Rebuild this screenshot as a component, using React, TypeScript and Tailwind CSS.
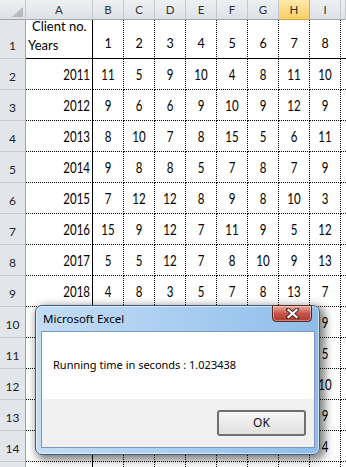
import React from "react";

const COLS = ["A", "B", "C", "D", "E", "F", "G", "H", "I"];

// rows 10-14 sit under the message box; only column I shows there
const ROWS: [string, (number | null)[]][] = [
  ["2011", [11, 5, 9, 10, 4, 8, 11, 10]],
  ["2012", [9, 6, 6, 9, 10, 9, 12, 9]],
  ["2013", [8, 10, 7, 8, 15, 5, 6, 11]],
  ["2014", [9, 8, 8, 5, 7, 8, 7, 9]],
  ["2015", [7, 12, 12, 8, 9, 8, 10, 3]],
  ["2016", [15, 9, 12, 7, 11, 9, 5, 12]],
  ["2017", [5, 5, 12, 7, 8, 10, 9, 13]],
  ["2018", [4, 8, 3, 5, 7, 8, 13, 7]],
  ["", [null, null, null, null, null, null, null, 9]],
  ["", [null, null, null, null, null, null, null, 5]],
  ["", [null, null, null, null, null, null, null, 10]],
  ["", [null, null, null, null, null, null, null, 9]],
  ["", [null, null, null, null, null, null, null, 4]],
  ["", [null, null, null, null, null, null, null, null]],
];

function Corner() {
  return (
    <div className="flex items-end justify-end border-r border-b border-r-[#c6cad0] border-b-[#9ea5ae] bg-gradient-to-b from-[#eef0f3] to-[#dde1e6] pr-[2px] pb-[2px]">
      <svg width="11" height="10" viewBox="0 0 11 10">
        <polygon points="11,0 11,10 0,10" fill="#b7bbc0" />
      </svg>
    </div>
  );
}

function ColHead({ label, active = false }: { label: string; active?: boolean }) {
  return (
    <div
      className={
        active
          ? "flex items-center justify-center border-r border-b border-[#e2a53b] bg-gradient-to-b from-[#fde9a8] to-[#f7cf66] text-[11.5px] text-[#333]"
          : "flex items-center justify-center border-r border-b border-r-[#c6cad0] border-b-[#9ea5ae] bg-gradient-to-b from-[#eef0f3] to-[#dde1e6] text-[11.5px] text-[#333]"
      }
    >
      {label}
    </div>
  );
}

function RowHead({ n }: { n: number | null }) {
  return (
    <div className="flex items-end justify-center border-r border-b border-r-[#9ea5ae] border-b-[#c6cad0] bg-[#e2e6eb] pb-[3px] text-[12px] text-[#222]">
      {n}
    </div>
  );
}

function MessageBox() {
  return (
    <div className="absolute left-[35px] top-[305px] z-10 flex h-[150px] w-[285px] flex-col rounded-[7px] border border-[#41597a] bg-gradient-to-r from-[#c4ddf5] via-[#a9cef1] to-[#8ebde9] shadow-[3px_3px_9px_2px_rgba(0,0,0,0.5),inset_0_0_0_1px_rgba(255,255,255,0.55)] [font-family:'Noto_Sans',sans-serif]">
      <div className="relative flex h-[25px] items-center pl-[7px] text-[11.5px] text-black">
        Microsoft Excel
        <div className="absolute right-[7px] top-[-1px] flex h-[17px] w-[40px] items-center justify-center rounded-b-[4px] border border-[#5e2a24] bg-gradient-to-b from-[#e9aa9e] via-[#c8544a] to-[#b23a2e] shadow-[inset_0_0_0_1px_rgba(255,255,255,0.35)]">
          <svg width="13" height="11" viewBox="0 0 13 11">
            <path d="M2 1.5 L11 9.5 M11 1.5 L2 9.5" stroke="#4a2a26" strokeWidth="4" strokeLinecap="square" />
            <path d="M2.5 2 L10.5 9 M10.5 2 L2.5 9" stroke="#ffffff" strokeWidth="2.2" strokeLinecap="square" />
          </svg>
        </div>
      </div>
      <div className="mb-[6px] ml-[5px] mr-[4px] flex flex-1 flex-col border border-[#7b97bb]">
        <div className="flex h-[67px] items-center bg-white pl-[11px] text-[11px] text-black">
          Running time in seconds : 1.023438
        </div>
        <div className="flex flex-1 items-start justify-end bg-[#f0f0f0] pt-[11px] pr-[8px]">
          <div className="flex h-[26px] w-[89px] items-center justify-center rounded-[3px] border-2 border-[#707070] bg-gradient-to-b from-[#f6f6f6] to-[#e1e1e1] text-[12px] text-[#111]">
            OK
          </div>
        </div>
      </div>
    </div>
  );
}

export default function App() {
  return (
    <div className="relative h-[467px] w-[346px] overflow-hidden bg-white [font-family:Lato,sans-serif]">
      <div className="grid grid-cols-[26px_67px_repeat(8,31px)_1fr] grid-rows-[20px_39px_repeat(14,31px)]">
        <Corner />
        {COLS.map((c) => (
          <ColHead key={c} label={c} active={c === "H"} />
        ))}
        <ColHead label="" />

        <RowHead n={1} />
        <div className="flex flex-col justify-end border-r border-b border-black pb-[3px] text-[13px] leading-[19px] text-black">
          <div className="pl-[6px]">Client no.</div>
          <div className="pl-[2px]">Years</div>
        </div>
        {[1, 2, 3, 4, 5, 6, 7, 8].map((n) => (
          <div
            key={n}
            className="flex items-end justify-center border-r border-b border-dotted border-black pb-[4px] text-[12.5px] text-black [border-bottom-style:solid]"
          >
            {n}
          </div>
        ))}
        <div className="border-b border-black" />

        {ROWS.map(([year, vals], i) => (
          <React.Fragment key={i}>
            <RowHead n={i + 2 < 15 ? i + 2 : null} />
            <div className="flex items-center justify-end border-r border-b border-dotted border-black pr-[2px] text-[11.5px] text-black [border-right-style:solid]">
              <span className="inline-block scale-y-[1.38]">{year}</span>
            </div>
            {vals.map((v, j) => (
              <div
                key={j}
                className="flex items-center justify-center border-r border-b border-dotted border-black text-[11.5px] text-black"
              >
                <span className="inline-block scale-y-[1.38]">{v}</span>
              </div>
            ))}
            <div className="border-b border-dotted border-black" />
          </React.Fragment>
        ))}
      </div>
      <MessageBox />
    </div>
  );
}
